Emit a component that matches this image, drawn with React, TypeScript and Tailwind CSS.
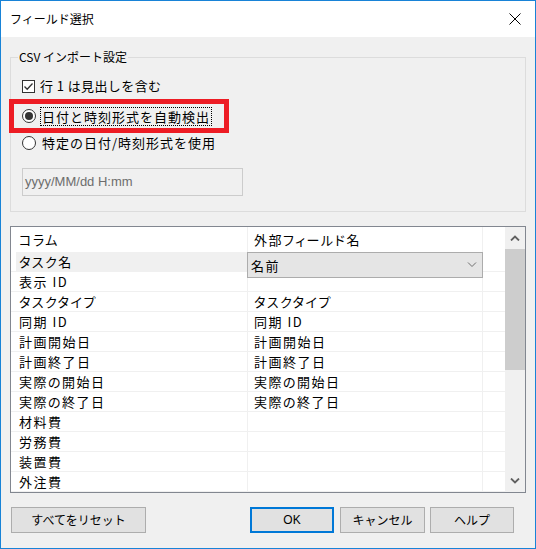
import clsx from 'clsx';

const rows: [string, string][] = [
  ['タスク名', ''],
  ['表示 ID', ''],
  ['タスクタイプ', 'タスクタイプ'],
  ['同期 ID', '同期 ID'],
  ['計画開始日', '計画開始日'],
  ['計画終了日', '計画終了日'],
  ['実際の開始日', '実際の開始日'],
  ['実際の終了日', '実際の終了日'],
  ['材料費', ''],
  ['労務費', ''],
  ['装置費', ''],
  ['外注費', ''],
];

function Chevron({ up = false, thin = false, className }: { up?: boolean; thin?: boolean; className?: string }) {
  return (
    <svg width="10" height="6" viewBox="0 0 10 6" className={className} aria-hidden="true">
      <polyline
        points={up ? '1,5.5 5,1.5 9,5.5' : '1,0.5 5,4.5 9,0.5'}
        fill="none"
        stroke="currentColor"
        strokeWidth={thin ? 1 : 1.8}
      />
    </svg>
  );
}

export default function App() {
  return (
    <div className="w-[536px] h-[549px] border border-[#1883d7] bg-[#f0f0f0] flex flex-col text-black font-['Noto_Sans_CJK_JP',sans-serif]">
      {/* Title bar */}
      <div className="h-[36px] bg-white flex items-center pl-[9px] shrink-0">
        <span className="text-[12px] leading-[16px]">フィールド選択</span>
        <svg width="12" height="12" viewBox="0 0 12 12" className="ml-auto mr-[14px]" aria-hidden="true">
          <path d="M0.5 0.5 L11.5 11.5 M11.5 0.5 L0.5 11.5" stroke="#000" strokeWidth="1" />
        </svg>
      </div>

      <div className="px-[9px]">
        {/* Import settings group */}
        <fieldset className="mt-[12px] w-[516px] border border-[#dcdcdc] pl-[7px] pb-[15px]">
          <legend className="px-[1px] text-[12px] leading-[16px]">CSV インポート設定</legend>
          <div className="pl-[4px] flex flex-col">
            <div className="mt-[11px] h-[20px] flex items-center">
              <span className="w-[13px] h-[13px] border border-[#333] bg-white flex items-center justify-center">
                <svg width="11" height="11" viewBox="0 0 11 11" aria-hidden="true">
                  <polyline points="1.5,5.5 4.2,8.3 9.5,2.5" fill="none" stroke="#333" strokeWidth="1.3" />
                </svg>
              </span>
              <span className="ml-[5px] text-[13px] leading-[18px] tracking-[0.4px]">行 1 は見出しを含む</span>
            </div>

            <div className="relative mt-[10px] h-[20px] flex items-center">
              <span className="w-[14px] h-[14px] rounded-full border border-[#333] bg-white flex items-center justify-center">
                <span className="w-[8px] h-[8px] rounded-full bg-[#333]" />
              </span>
              <span className="ml-[4px] px-[1px] border border-dotted border-black text-[13px] leading-[17px] tracking-[1px]">
                日付と時刻形式を自動検出
              </span>
              <div className="absolute left-[-13px] top-[-7px] w-[220px] h-[34px] border-[5px] border-[#ed1c24] pointer-events-none" />
            </div>

            <div className="mt-[7px] h-[20px] flex items-center">
              <span className="w-[14px] h-[14px] rounded-full border border-[#333] bg-white" />
              <span className="ml-[6px] text-[13px] leading-[18px] tracking-[1px]">特定の日付/時刻形式を使用</span>
            </div>

            <div className="mt-[15px] w-[221px] h-[28px] border border-[#cccccc] bg-[#f0f0f0] flex items-center pl-[2px]">
              <span className="text-[13px] text-[#6d6d6d] font-['Liberation_Sans',sans-serif]">yyyy/MM/dd H:mm</span>
            </div>
          </div>
        </fieldset>

        {/* Field mapping table */}
        <div className="mt-[14px] w-[516px] h-[267px] border border-[#828790] bg-white flex text-[13px] [font-feature-settings:'palt'] tracking-[1.5px]">
          <div className="flex-1 flex flex-col">
            <div className="h-[25px] flex shrink-0">
              <div className="w-[237px] border-r border-[#f0f0f0] pl-[8px] flex items-center">コラム</div>
              <div className="w-[235px] border-r border-[#f0f0f0] pl-[6px] flex items-center">外部フィールド名</div>
              <div className="flex-1" />
            </div>
            {rows.map(([col, ext], i) => (
              <div key={col} className="h-[20px] flex border-b border-[#f0f0f0] leading-[19px]">
                <div className="w-[237px] border-r border-[#f0f0f0] pl-[5px] flex">
                  <div className={clsx('flex-1 pl-[3px]', i === 0 && 'bg-[#f0f0f0]')}>{col}</div>
                </div>
                <div className="relative w-[235px] border-r border-[#f0f0f0] pl-[6px]">
                  {ext}
                  {i === 0 && (
                    <div className="absolute z-10 left-[-1px] top-0 w-[236px] h-[26px] bg-[#e5e5e5] border border-[#acacac] flex items-center pl-[3px] pr-[5px]">
                      <span>名前</span>
                      <Chevron thin className="ml-auto text-[#6f6f6f]" />
                    </div>
                  )}
                </div>
                <div className="flex-1" />
              </div>
            ))}
          </div>

          {/* Scrollbar */}
          <div className="w-[20px] bg-[#f0f0f0] flex flex-col">
            <div className="h-[22px] flex items-center justify-center text-[#606060]">
              <Chevron up />
            </div>
            <div className="h-[121px] bg-[#cdcdcd]" />
            <div className="flex-1" />
            <div className="h-[22px] flex items-center justify-center text-[#606060]">
              <Chevron />
            </div>
          </div>
        </div>
      </div>

      {/* Buttons */}
      <div className="mt-[14px] pl-[10px] pr-[21px] flex text-[12px]">
        <button className="w-[135px] h-[26px] bg-[#e1e1e1] border border-[#adadad]">すべてをリセット</button>
        <button className="ml-auto w-[84px] h-[26px] bg-[#e1e1e1] border-2 border-[#0078d7] font-['Liberation_Sans',sans-serif]">OK</button>
        <button className="ml-[6px] w-[85px] h-[26px] bg-[#e1e1e1] border border-[#adadad]">キャンセル</button>
        <button className="ml-[5px] w-[84px] h-[26px] bg-[#e1e1e1] border border-[#adadad]">ヘルプ</button>
      </div>
    </div>
  );
}
